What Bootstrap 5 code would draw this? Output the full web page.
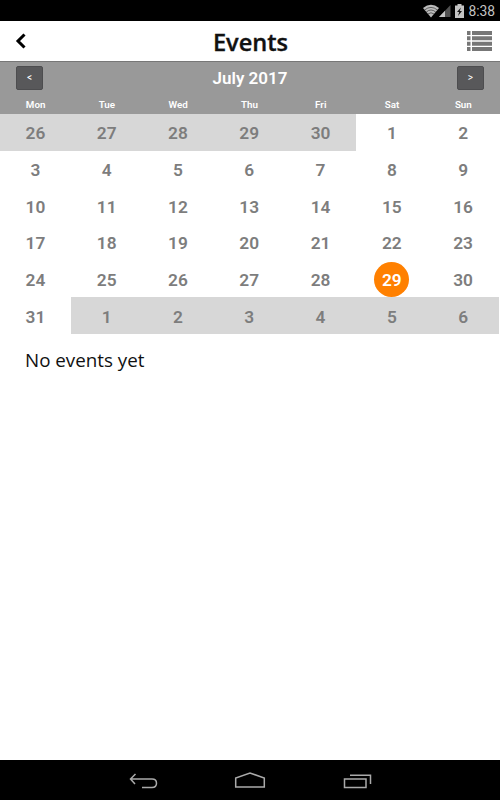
<!DOCTYPE html>
<html lang="en">
<head>
<meta charset="utf-8">
<meta name="viewport" content="width=device-width, initial-scale=1">
<title>Events</title>
<link href="https://cdn.jsdelivr.net/npm/bootstrap@5.3.0/dist/css/bootstrap.min.css" rel="stylesheet">
<style>
body{font-family:Roboto,sans-serif;width:500px;height:800px;background:#fff;overflow:hidden}
svg{display:block;flex:none}
.statusbar{height:21px;background:#000;color:#c4c4c4;font-size:13.8px;line-height:20px;padding-right:5px}
.statusbar span{padding-top:1px}
.titlebar{height:40px;padding:0 8px 0 15px}
.titlebar h1{font:600 23.6px/40px "Open Sans",sans-serif;color:#111;-webkit-text-stroke:.35px #111;padding-top:1px}
.side{width:27px}
.calhead{height:53px;background:#999;border-top:1px solid #777;color:#fff}
.monthrow{height:34px;padding:0 16px 2px}
.month{font-size:17px;font-weight:600;line-height:32px}
.step{width:27px;height:24px;padding:0;font-size:10px;line-height:22px;font-weight:400;color:#fff;background:#58585a;border:1px solid #4d4d4f;border-radius:2px}
.week{width:499px;display:grid;grid-template-columns:repeat(7,1fr)}
.names{font-size:9.8px;font-weight:600;line-height:18px}
.days{height:220px;grid-template-rows:repeat(6,1fr);color:#7d7d7d;font-size:17.3px;font-weight:600}
.days>div{padding-top:4px;padding-right:.5px}
.other{background:#d7d7d7}
.days>.today{padding-top:1px}
.today span{width:35px;height:35px;line-height:37px;background:#ff8000;color:#fff}
.note{font:400 18.8px/26px "Open Sans",sans-serif;color:#111;padding:13px 25px}
.navkeys{height:40px;background:#000}
</style>
<script src="https://cdn.jsdelivr.net/npm/bootstrap@5.3.0/dist/js/bootstrap.bundle.min.js"></script>
</head>
<body class="d-flex flex-column">
<div class="statusbar d-flex justify-content-end align-items-center">
  <svg width="16" height="14" viewBox="0 0 16 14"><path d="M0 4Q8-2.500 16 4L8 13.500Z" fill="#bbb"/><path d="M1.500 6Q8 .8 14.500 6M3.300 8Q8 4 12.700 8M5 10Q8 7.500 11 10" fill="none" stroke="#333" stroke-width=".7"/></svg>
  <svg width="12" height="14" viewBox="0 0 12 14"><path d="M11.500 1V13H0Z" fill="#505050"/><path d="M6 6.700V13H0Z" fill="#c4c4c4"/></svg>
  <svg class="ms-1" width="9" height="14" viewBox="0 0 9 14"><path d="M2.500 0h4v1.500H9V14H0V1.500h2.500Z" fill="#c4c4c4"/><path d="M6 3.500 2 8h2.200L3 12l4-5H4.700Z" fill="#111"/></svg>
  <span class="ms-1">8:38</span>
</div>
<header class="titlebar d-flex align-items-center justify-content-between">
  <div class="side"><svg width="12" height="16" viewBox="0 0 12 16"><path d="M9.500 1.500 3 8l6.500 6.500" fill="none" stroke="#000" stroke-width="3"/></svg></div>
  <h1 class="m-0 pe-2">Events</h1>
  <svg width="25" height="20" viewBox="0 0 25 20" fill="#777"><path d="M0 0h3.500v4H0zM5 0h20v4H5zM0 5.300h3.500v4H0zM5 5.300h20v4H5zM0 10.700h3.500v4H0zM5 10.700h20v4H5zM0 16h3.500v4H0zM5 16h20v4H5z"/></svg>
</header>
<section class="calhead">
  <div class="monthrow d-flex align-items-center justify-content-between">
    <button class="step btn">&lt;</button><div class="month">July 2017</div><button class="step btn">&gt;</button>
  </div>
  <div class="week names text-center"><span>Mon</span><span>Tue</span><span>Wed</span><span>Thu</span><span>Fri</span><span>Sat</span><span>Sun</span></div>
</section>
<div class="week days" id="days"></div>
<main class="note flex-grow-1">No events yet</main>
<footer class="navkeys">
  <div class="d-flex justify-content-between h-100 align-items-center mx-auto pt-1" style="width:244px">
    <svg width="30" height="20" viewBox="0 0 30 20" fill="none" stroke="#aaa" stroke-width="1.500"><path d="M7.500 2 2.500 7l4.500 5M3 7h21q4.500 0 4.500 4.200T24 15.500H14"/></svg>
    <svg width="32" height="20" viewBox="0 0 32 20" fill="none" stroke="#aaa" stroke-width="1.500"><path d="M1.700 15V6L16 1l14.300 5v9Z"/></svg>
    <svg width="30" height="20" viewBox="0 0 30 20" fill="none" stroke="#aaa" stroke-width="1.500"><path d="M2.500 7H24v8.500H2.500zM8 3.200h20.500V12"/></svg>
  </div>
</footer>
<script>
// Monday-first grid for July 2017, padded with adjacent months
const grid = document.getElementById('days');
for (let i = 0; i < 42; i++) {
  const d = new Date(2017, 5, 26 + i), cell = document.createElement('div'), n = document.createElement('span');
  cell.className = 'd-flex align-items-center justify-content-center';
  if (d.getMonth() !== 6) cell.classList.add('other');
  if (d.getMonth() === 6 && d.getDate() === 29) { cell.classList.add('today'); n.className = 'rounded-circle text-center'; }
  n.textContent = d.getDate();
  cell.append(n); grid.append(cell);
}
</script>
</body>
</html>
